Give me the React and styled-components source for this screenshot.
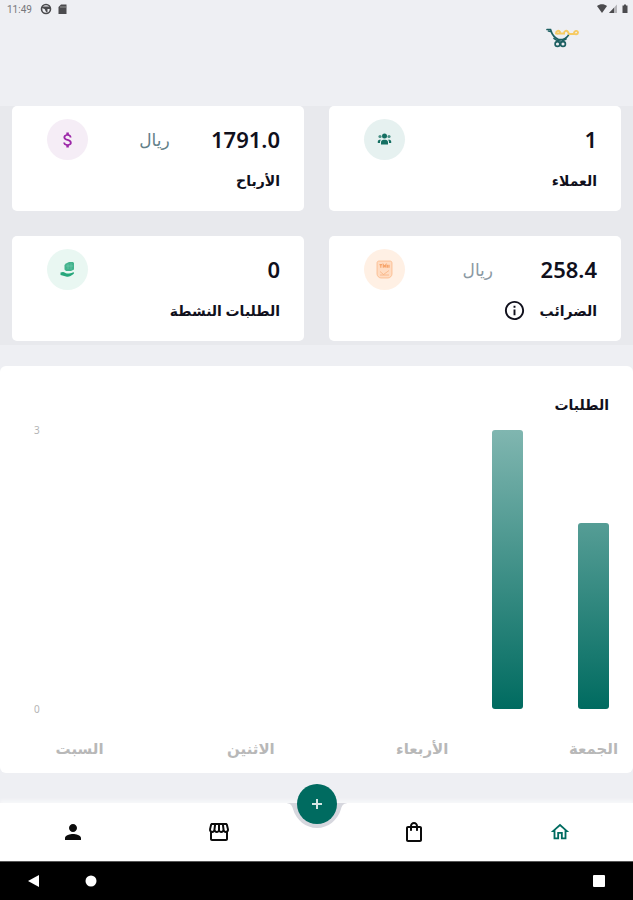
import styled, { createGlobalStyle } from "styled-components";
import {
  MdAttachMoney,
  MdInfoOutline,
  MdOutlineShoppingBag,
  MdOutlineStorefront,
  MdPerson,
} from "react-icons/md";

const GlobalStyle = createGlobalStyle`
  * {
    box-sizing: border-box;
  }
  body {
    margin: 0;
    background-color: #eeeff3;
    font-family: "Noto Sans", "DejaVu Sans", sans-serif;
    color: #10101c;
  }
  button {
    border: none;
    padding: 0;
    background: none;
    cursor: pointer;
  }
`;

const Screen = styled.div`
  display: flex;
  flex-direction: column;
  min-height: 100vh;
`;

const StatusBar = styled.div`
  display: flex;
  align-items: center;
  gap: 8px;
  height: 18px;
  padding: 0 4px 0 7px;
  font-family: Roboto, sans-serif;
  font-size: 10px;
  color: #77777b;
`;

const StatusSignals = styled.div`
  display: flex;
  align-items: center;
  gap: 3px;
  margin-left: auto;
`;

const Header = styled.header`
  height: 88px;
  padding: 10px 53px 0;
`;

const Cards = styled.section`
  display: grid;
  grid-template-columns: 1fr 1fr;
  gap: 25px;
  padding: 0 12px 4px;
  background-color: #e8e9ed;
`;

const StyledCard = styled.article`
  height: 105px;
  padding: 13px 24px 0 35px;
  border-radius: 5px;
  background-color: #fff;
`;

const CardTop = styled.div`
  display: flex;
  align-items: center;
  justify-content: space-between;
  height: 41px;
`;

const Value = styled.strong`
  padding-bottom: 2px;
  font-size: 22px;
  font-weight: 600;
  line-height: 30px;
`;

const Currency = styled.span`
  padding-left: 10px;
  font-size: 17px;
  color: ${({ $color }) => $color};
`;

const Badge = styled.span`
  display: grid;
  place-items: center;
  width: 41px;
  height: 41px;
  border-radius: 50%;
  color: ${({ $color }) => $color};
  background-color: ${({ $tint }) => $tint};
`;

const CardLabel = styled.h2`
  display: flex;
  align-items: center;
  gap: 14px;
  height: 24px;
  margin: 8px 0 0;
  font-size: 14px;
  font-weight: 700;
`;

const InfoButton = styled.button`
  display: flex;
  color: #10101c;
`;

const ChartCard = styled.section`
  display: flex;
  flex: 1;
  flex-direction: column;
  margin: 21px 0 30px;
  padding: 27px 24px 13px 34px;
  border-radius: 6px;
  background-color: #fff;
`;

const ChartTitle = styled.h2`
  height: 24px;
  margin: 0 0 13px;
  font-size: 14px;
  font-weight: 700;
  line-height: 24px;
`;

const Plot = styled.div`
  display: flex;
  flex: 1;
  min-height: 200px;
`;

const Bars = styled.div`
  display: flex;
  flex: 1;
  align-items: flex-end;
  justify-content: space-between;
`;

const Bar = styled.div`
  width: 31px;
  border-radius: 3px;
  background-image: linear-gradient(#80b6b0, #006b60);
  background-position: bottom;
`;

const Axis = styled.div`
  display: flex;
  flex-direction: column;
  justify-content: space-between;
  align-items: flex-end;
  width: 30px;
  margin: -6px 0;
  font-size: 10px;
  line-height: 12px;
  color: #b4b4b4;
`;

const Days = styled.div`
  display: flex;
  justify-content: space-between;
  margin-top: 27px;
  padding-left: 30px;
`;

const Day = styled.span`
  display: flex;
  justify-content: center;
  width: 31px;
  height: 24px;
  font-size: 15px;
  font-weight: 700;
  line-height: 24px;
  white-space: nowrap;
  color: #b8b8b8;
`;

const TabBar = styled.nav`
  position: relative;
  display: flex;
  height: 58px;
  background-color: #fff;
  box-shadow: 0 -3px 3px #f6f7f9;
`;

const Tab = styled.a`
  display: grid;
  flex: 1;
  place-items: center;
  color: ${({ $active }) => ($active ? "#006b60" : "#0c0c0c")};
`;

const TabGap = styled.span`
  width: 49px;
`;

const Notch = styled.svg`
  position: absolute;
  top: 0;
  left: 50%;
  transform: translateX(-50%);
`;

const AddButton = styled.button`
  position: absolute;
  top: -19px;
  left: 50%;
  display: grid;
  place-items: center;
  width: 40px;
  height: 40px;
  border-radius: 50%;
  background-color: #006b60;
  color: #d5e6e4;
  transform: translateX(-50%);
`;

const SystemBar = styled.div`
  display: flex;
  align-items: center;
  gap: 45px;
  height: 39px;
  padding: 0 27px;
  border-top: 1px solid #555;
  background-color: #000;
`;

const SystemButton = styled.button`
  display: flex;
  margin-left: ${({ $end }) => ($end ? "auto" : "0")};
`;

const Logo = () => (
  <svg width="34" height="20" viewBox="0 0 34 20" role="img" aria-label="سلة">
    <g fill="none" stroke="#1d5f61" strokeWidth="1.700" strokeLinecap="round">
      <path d="M1 1.500h3.500c1.500 5 4 8.500 8 10h4c3.500-1 5.500-3 6.500-5.500" />
      <path d="M2.500 3l2 .5M8 10.500c2 2 4 2.500 6.500 2.500M20 11l-4 2" />
      <circle cx="11.500" cy="16" r="2.400" />
      <circle cx="17" cy="16" r="2.400" />
    </g>
    <g fill="none" stroke="#f6ca62" strokeWidth="1.900" strokeLinecap="round">
      <path d="M10 5.500c0-3 3-3.500 4-1.500 0 2-3 2-4 1.500h8c0-3 3-3.500 4-1.500l1 2h5" />
      <path d="M28 5.500c0-3 4-3.500 4-1s-3 2-4 1" />
    </g>
  </svg>
);

const UsersIcon = () => (
  <svg width="15" height="13" viewBox="0 0 15 13" fill="currentColor">
    <circle cx="7.500" cy="3" r="2.500" />
    <circle cx="3" cy="3.500" r="1.600" opacity=".75" />
    <circle cx="12" cy="3.500" r="1.600" opacity=".75" />
    <path d="M4 11.500V9.200c0-1.400 1.200-2.400 2.600-2.400h1.800c1.400 0 2.600 1 2.600 2.400v2.300z" />
    <path d="M.8 10V8.500C.8 7.200 2 6.500 4 6.700 3 7.700 3 8.500 3 10zM14.200 10V8.500c0-1.300-1.200-2-3.200-1.800 1 1 1 1.800 1 3.300z" />
  </svg>
);

const ReceiptIcon = () => (
  <svg width="17" height="19" viewBox="0 0 17 19" fill="none" stroke="currentColor">
    <path
      d="M3 1h11c1.200 0 2 .8 2 2v11c0 2-2 4-4 4H5c-2 0-4-2-4-4V3c0-1.200.8-2 2-2z"
      fill="#ffdcc2"
      strokeOpacity=".55"
    />
    <path d="M3.500 4.700h2.600M4.800 4.700v3M7.300 7.700v-3l1.300 2 1.300-2v3M11.500 7.700v-3M13 7.700v-3" strokeWidth="1.200" />
    <path d="M4 11.500l3.500 3 5.500-4M4 15h9" strokeOpacity=".6" />
  </svg>
);

const DeliveryIcon = () => (
  <svg width="15" height="17" viewBox="0 0 15 17" fill="currentColor">
    <path d="M6 2.500l3-1.500h4l1 1v6.500l-3 1.500H6L4.500 8.500V4z" opacity=".85" />
    <path d="M8 3v5M11 2.500v6M6 5h7" stroke="#74cfaf" strokeWidth=".6" />
    <path d="M.5 11.500l2.500-.6c1.500 0 2.500 1.600 4 1.600h2c1.800 0 3.300-1 4.700-1.200.7.500.3 1.300-.5 2L10.500 15c-1.500.8-3 .8-4.500.5L.5 14z" />
  </svg>
);

const PlusIcon = () => (
  <svg width="12" height="12" viewBox="0 0 12 12" stroke="currentColor" strokeWidth="2">
    <path d="M6 1v10M1 6h10" />
  </svg>
);

const HomeIcon = () => (
  <svg width="22" height="22" viewBox="0 0 24 24" fill="currentColor">
    <path d="M12 5.690l5 4.500V18h-2v-6H9v6H7v-7.810l5-4.500M12 3L2 12h3v8h6v-6h2v6h6v-8h3L12 3z" />
  </svg>
);

const cards = [
  { label: "العملاء", value: "1", icon: <UsersIcon />, color: "#146f62", tint: "#e6f1f0" },
  {
    label: "الأرباح",
    value: "1791.0",
    currency: "#637f89",
    icon: <MdAttachMoney size={20} />,
    color: "#9c27a8",
    tint: "#f5edf6",
  },
  {
    label: "الضرائب",
    value: "258.4",
    currency: "#8b99a3",
    info: true,
    icon: <ReceiptIcon />,
    color: "#f7a56c",
    tint: "#fff0e4",
  },
  { label: "الطلبات النشطة", value: "0", icon: <DeliveryIcon />, color: "#26a77b", tint: "#e9f7f2" },
];

const maxOrders = 3;

// every second day gets a label under the chart
const week = [
  { day: "الجمعة", orders: 2 },
  { day: "", orders: 3 },
  { day: "الأربعاء", orders: 0 },
  { day: "", orders: 0 },
  { day: "الاثنين", orders: 0 },
  { day: "", orders: 0 },
  { day: "السبت", orders: 0 },
];

const Card = ({ label, value, currency, info, icon, color, tint }) => (
  <StyledCard>
    <CardTop>
      <Value>{value}</Value>
      {currency && <Currency $color={currency}>ريال</Currency>}
      <Badge $color={color} $tint={tint}>
        {icon}
      </Badge>
    </CardTop>
    <CardLabel>
      {label}
      {info && (
        <InfoButton type="button" aria-label="معلومات">
          <MdInfoOutline size={23} />
        </InfoButton>
      )}
    </CardLabel>
  </StyledCard>
);

const App = () => {
  return (
    <Screen dir="rtl" lang="ar">
      <GlobalStyle />
      <StatusBar dir="ltr">
        <span>11:49</span>
        <svg width="30" height="12" viewBox="0 0 30 12">
          <circle cx="6" cy="6" r="4.500" fill="#eeeff3" stroke="#4b4b4e" strokeWidth="1.600" />
          <path d="M2 3.500h8V6H7.500v3.500C5 9 5.500 6.500 4.500 6L2 5z" fill="#4b4b4e" />
          <path d="M21 1.500h5.500V11h-8V4z" fill="#4b4b4e" />
          <path d="M21 3v2M23 3v2M25 3v2" stroke="#aaa" strokeWidth=".8" />
        </svg>
        <StatusSignals>
          <svg width="32" height="10" viewBox="0 0 32 10" fill="#4b4b4e">
            <path d="M0 2c3-2.400 7-2.400 10 0L5 9z" />
            <path d="M20 .5V9h-8z" opacity=".35" />
            <path d="M17 3.700V9h-5z" />
            <path d="M27 .5h2v1h1.500V9h-5V1.500H27z" />
          </svg>
        </StatusSignals>
      </StatusBar>
      <Header>
        <Logo />
      </Header>

      <Cards>
        {cards.map((card) => (
          <Card key={card.label} {...card} />
        ))}
      </Cards>

      <ChartCard>
        <ChartTitle>الطلبات</ChartTitle>
        <Plot>
          <Bars>
            {week.map(({ orders }, i) => (
              <Bar
                key={i}
                style={{
                  height: `${(orders / maxOrders) * 100}%`,
                  backgroundSize: `100% ${orders ? (maxOrders / orders) * 100 : 100}%`,
                }}
              />
            ))}
          </Bars>
          <Axis>
            <span>{maxOrders}</span>
            <span>0</span>
          </Axis>
        </Plot>
        <Days>
          {week.map(({ day }, i) => (
            <Day key={i}>{day}</Day>
          ))}
        </Days>
      </ChartCard>

      <TabBar>
        <Tab href="#home" aria-label="الرئيسية" $active>
          <HomeIcon />
        </Tab>
        <Tab href="#orders" aria-label="الطلبات">
          <MdOutlineShoppingBag size={24} />
        </Tab>
        <TabGap />
        <Tab href="#store" aria-label="المتجر">
          <MdOutlineStorefront size={24} />
        </Tab>
        <Tab href="#profile" aria-label="الحساب">
          <MdPerson size={24} />
        </Tab>
        <Notch width="64" height="25" viewBox="0 0 64 25">
          <path d="M0 0c5 0 7 2 8 6 3 11 13 19 24 19s21-8 24-19c1-4 3-6 8-6z" fill="#d6d7de" />
        </Notch>
        <AddButton type="button" aria-label="إضافة">
          <PlusIcon />
        </AddButton>
      </TabBar>

      <SystemBar dir="ltr">
        <SystemButton type="button" aria-label="Back">
          <svg width="13" height="12" viewBox="0 0 13 12">
            <path d="M12 0v12L1 6z" fill="#fff" />
          </svg>
        </SystemButton>
        <SystemButton type="button" aria-label="Home">
          <svg width="12" height="12" viewBox="0 0 12 12">
            <circle cx="6" cy="6" r="5.500" fill="#fff" />
          </svg>
        </SystemButton>
        <SystemButton type="button" aria-label="Recent apps" $end>
          <svg width="13" height="12" viewBox="0 0 13 12">
            <rect width="12" height="12" rx="1" fill="#fff" />
          </svg>
        </SystemButton>
      </SystemBar>
    </Screen>
  );
};

export default App;
